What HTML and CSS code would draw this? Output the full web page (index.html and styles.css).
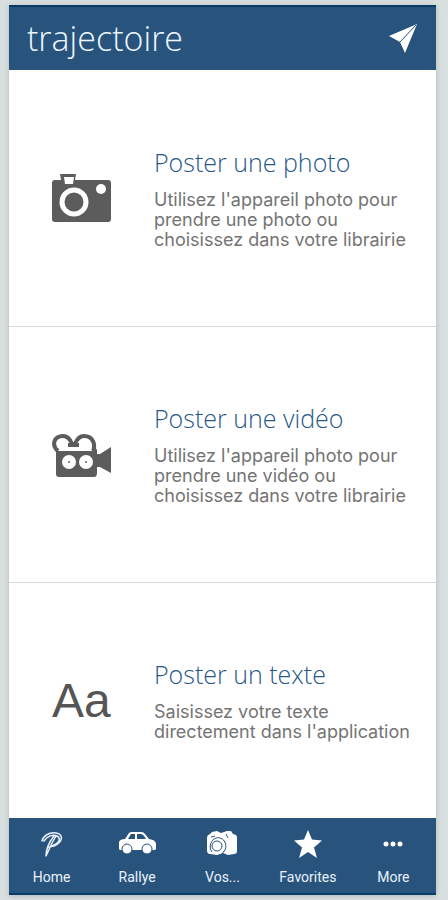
FILE: index.html
```html
<!DOCTYPE html>
<html lang="fr">
<head>
<meta charset="utf-8">
<meta name="viewport" content="width=device-width, initial-scale=1">
<title>trajectoire</title>
<link rel="stylesheet" href="styles.css">
</head>
<body>
<div class="app">
  <header class="topbar">
    <h1 class="brand">trajectoire</h1>
    <button class="send" type="button" aria-label="Envoyer">
      <svg width="30" height="30" viewBox="0 0 30 30"><path d="M29 1 1 13l11 6 5 11Z" fill="#fff"/><path d="M28 2 12 19" stroke="#28537d"/></svg>
    </button>
  </header>
  <main class="choices">
    <a class="choice" href="#photo">
      <svg class="picto" width="60" height="60" viewBox="0 0 60 60" fill="#5c5c5c">
        <path fill-rule="evenodd" d="M8 6h16l-1 6h33q3 0 3 3v36q0 3-3 3H3q-3 0-3-3V15q0-3 3-3h6ZM12 9l1 7h8l1-7Z"/>
        <circle cx="22" cy="34" r="12" fill="none" stroke="#fff" stroke-width="5"/>
        <circle cx="49" cy="21" r="5" fill="#fff"/>
      </svg>
      <span class="copy">
        <span class="title">Poster une photo</span>
        <span class="text">Utilisez l'appareil photo pour<br>prendre une photo ou<br>choisissez dans votre librairie</span>
      </span>
    </a>
    <a class="choice" href="#video">
      <svg class="picto" width="60" height="60" viewBox="0 0 60 60" fill="#5c5c5c">
        <path d="M4 26h38v-1q2-3 3 0v4h3l11-7v26l-11-6h-3v6q0 4-3 4H7q-3 0-3-3Z"/>
        <path d="M6 26C-1 20 2 11 11 11q6 0 9 8h3q3-8 9-8c9 0 12 9 9 15" fill="none" stroke="#5c5c5c" stroke-width="4"/>
        <path d="M16 20h11" stroke="#5c5c5c" stroke-width="4"/>
        <path d="M40 20q5 2 5 9h-5Z"/>
        <g fill="#fff"><circle cx="17" cy="37" r="7"/><circle cx="34" cy="37" r="7"/></g>
        <circle cx="17" cy="37" r="1"/><circle cx="34" cy="37" r="1"/>
      </svg>
      <span class="copy">
        <span class="title">Poster une vidéo</span>
        <span class="text">Utilisez l'appareil photo pour<br>prendre une vidéo ou<br>choisissez dans votre librairie</span>
      </span>
    </a>
    <a class="choice" href="#texte">
      <span class="picto letters">Aa</span>
      <span class="copy">
        <span class="title">Poster un texte</span>
        <span class="text">Saisissez votre texte<br>directement dans l'application</span>
      </span>
    </a>
  </main>
  <nav class="tabs">
    <a class="tab" href="#home">
      <svg width="24" height="28" viewBox="0 0 24 28" fill="none" stroke="#e9f2fc" stroke-width="1.500" stroke-linecap="round" stroke-linejoin="round"><path d="M2 11C3 6 9 2 16 3c8 1 7 9-2 13l-5 1M14 6C10 11 6 18 6 26L12 13 16 6M4 11c3-5 9-7 13-5 5 3 1 8-5 10"/></svg>
      <span>Home</span>
    </a>
    <a class="tab" href="#rallye">
      <svg width="38" height="28" viewBox="0 0 38 28"><path d="M1 12q1-3 6-3l4-6q1-1 3-1h9q3 0 4 2l4 5q7 1 7 5v5q0 1-2 1H2q-1 0-1-2Z" fill="#fff"/><path d="m10 9 3-5h4v5ZM19 4h4q2 0 5 5h-9Z" fill="#28537d"/><g fill="#fff" stroke="#28537d"><circle cx="9" cy="19" r="5"/><circle cx="29" cy="19" r="5"/></g></svg>
      <span>Rallye</span>
    </a>
    <a class="tab" href="#vos">
      <svg width="32" height="28" viewBox="0 0 32 28"><path d="M1 8q0-3 3-4l2-2 5-1 4 2 6-2h4l2 3 3 1q1 1 1 3v13q0 3-3 3l-6 1-5-2-6 2-7-1q-3 0-3-4Z" fill="#fff"/><g fill="none" stroke="#28537d"><circle cx="11" cy="16" r="5"/><path d="M6 22c-4-5-1-12 4-14M10 8c7-2 12 6 9 12l-3 4M20 4l2 4M5 7l4-1"/></g></svg>
      <span>Vos...</span>
    </a>
    <a class="tab" href="#favorites">
      <svg width="28" height="28" viewBox="0 0 28 28"><path d="m14 0 4 9.500 10 1-8 7 3 10.500-9-6-9 6 3-10.500-8-7 10-1Z" fill="#fff"/></svg>
      <span>Favorites</span>
    </a>
    <a class="tab" href="#more">
      <svg width="20" height="28" viewBox="0 0 20 28" fill="#fff"><circle cx="3" cy="14" r="2.500"/><circle cx="10" cy="14" r="2.500"/><circle cx="17" cy="14" r="2.500"/></svg>
      <span>More</span>
    </a>
  </nav>
</div>
</body>
</html>
```
FILE: styles.css
```css
* { box-sizing: border-box; }
body {
  margin: 0;
  min-height: 100vh;
  display: flex;
  padding: 5px 12px 5px 9px;
  background: #d9dfde;
  font-family: Roboto, "Liberation Sans", sans-serif;
}
.app {
  flex: 1;
  display: flex;
  flex-direction: column;
  background: #fff;
  box-shadow: 0 1px 5px #aeb9b9;
}
.topbar {
  display: flex;
  align-items: center;
  justify-content: space-between;
  height: 65px;
  padding: 0 18px 2px;
  background: #28537d;
  border-top: 2px solid #073b68;
}
.brand {
  margin: 0;
  color: #eef6ff;
  font: 300 34px/40px "Open Sans", "Noto Sans", sans-serif;
}
.send { display: flex; padding: 0; border: 0; background: none; }
.choices {
  flex: 1;
  display: grid;
  grid-template-rows: 256fr 256fr 236fr;
}
.choice {
  display: flex;
  align-items: center;
  gap: 42px;
  padding-left: 43px;
  text-decoration: none;
  color: #747474;
}
.choice + .choice { border-top: 1px solid #d8d8d8; }
.picto { flex: none; width: 60px; }
.letters { color: #555; font: 48px/60px "Liberation Sans", sans-serif; }
.copy {
  display: flex;
  flex-direction: column;
  gap: 10px;
  padding-bottom: 3px;
  white-space: nowrap;
}
.title { color: #285789; font: 300 25px/36px "Open Sans", "Noto Sans", sans-serif; }
.text { font: 400 18px/20px Inter, Roboto, sans-serif; }
.tabs {
  display: grid;
  grid-template-columns: repeat(5, 1fr);
  height: 77px;
  background: #28537d;
  border-bottom: 2px solid #073b68;
}
.tab {
  display: flex;
  flex-direction: column;
  align-items: center;
  gap: 9px;
  padding-top: 12px;
  color: #e9f2fc;
  font-size: 14px;
  line-height: 20px;
  text-decoration: none;
}
```
